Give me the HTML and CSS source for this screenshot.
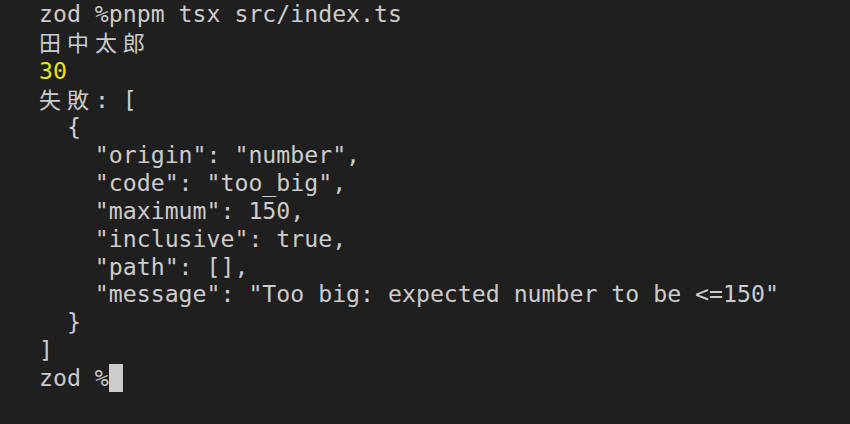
FILE: index.html
```html
<!DOCTYPE html>
<html lang="ja">
<head>
<meta charset="utf-8">
<title>Terminal</title>
<link rel="stylesheet" href="styles.css">
</head>
<body>
<pre class="term">zod %pnpm tsx src/index.ts
<span class="cjk">田中太郎</span>
<span class="yellow">30</span>
<span class="cjk">失敗</span>: [
  {
    "origin": "number",
    "code": "too_big",
    "maximum": 150,
    "inclusive": true,
    "path": [],
    "message": "Too big: expected number to be &lt;=150"
  }
]
zod %<span class="cursor"> </span></pre>
</body>
</html>
```
FILE: styles.css
```css
html, body {
  margin: 0;
  padding: 0;
  background: #1f1f1f;
  height: 100%;
}
.term {
  margin: 0;
  padding: 0 0 0 39px;
  font-family: "DejaVu Sans Mono", "Liberation Mono", monospace;
  font-size: 23.2px;
  line-height: 27.85px;
  color: #cccccc;
  white-space: pre;
}
.cjk {
  font-family: "Noto Sans CJK JP", sans-serif;
  font-size: 22px;
  letter-spacing: 5.94px;
}
.yellow {
  color: #e5e510;
}
.cursor {
  display: inline-block;
  width: 14px;
  height: 28px;
  background: #cccccc;
  vertical-align: top;
}
```
